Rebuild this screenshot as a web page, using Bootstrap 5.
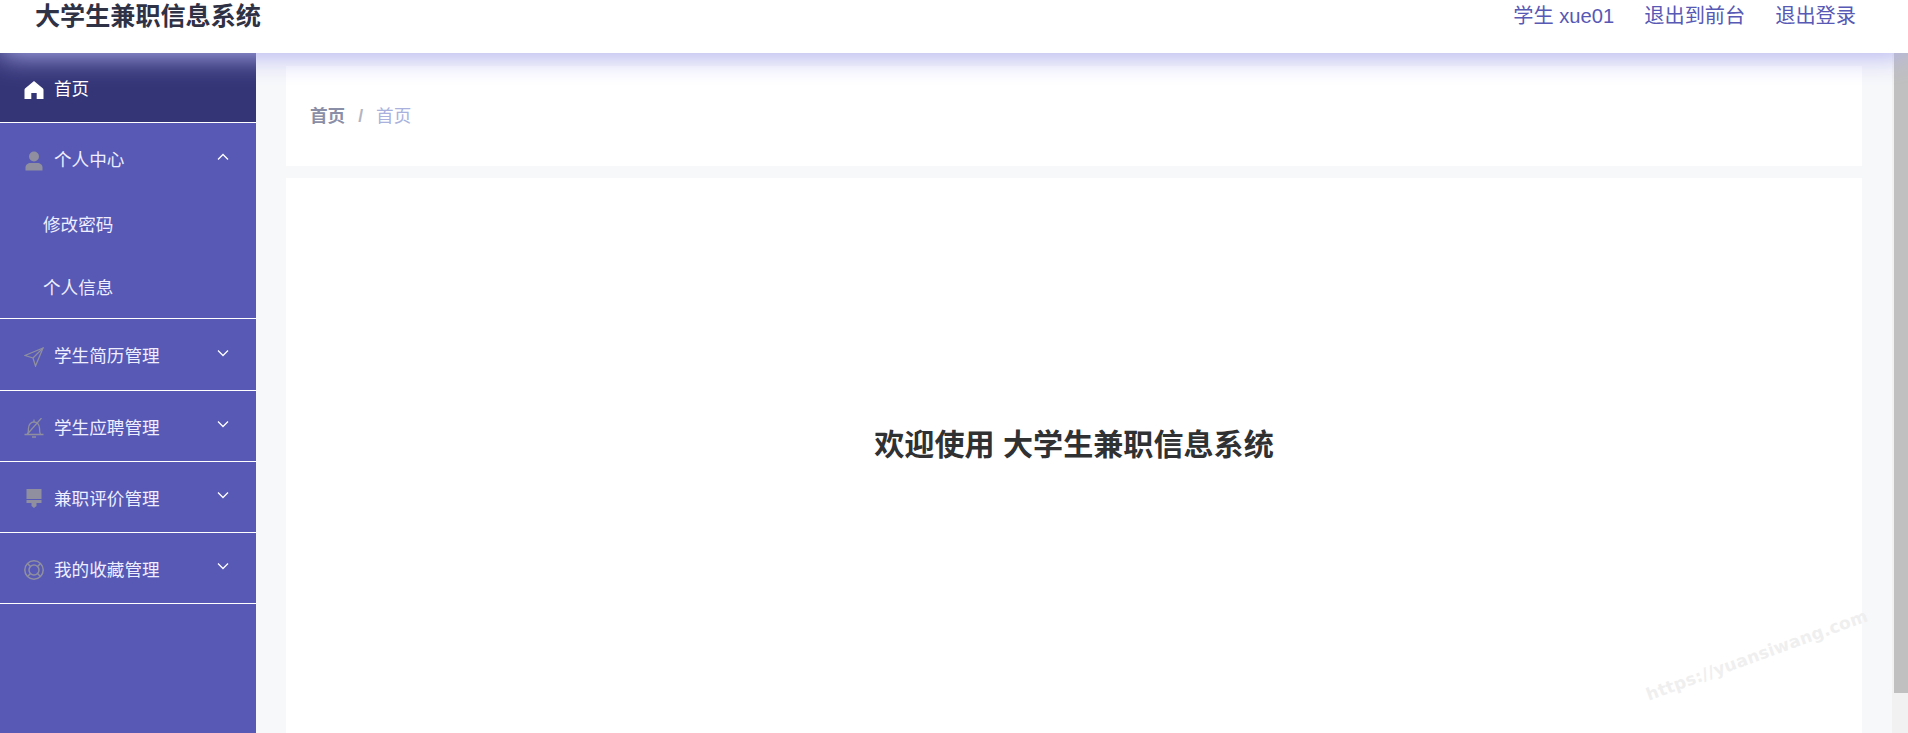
<!DOCTYPE html>
<html lang="zh-CN">
<head>
<meta charset="UTF-8">
<meta name="viewport" content="width=device-width, initial-scale=1.0">
<title>大学生兼职信息系统</title>
<link rel="stylesheet" href="https://cdn.jsdelivr.net/npm/bootstrap@5.3.0/dist/css/bootstrap.min.css">
<style>
  html, body { height: 100%; overflow: hidden; }
  body { font-family: "Liberation Sans", "Noto Sans CJK SC", sans-serif; background: #fff; }
  .app-shell { height: 733px; }
  .top-bar { height: 53px; background: #fff; box-shadow: 0 3px 28px #b0b0f0; z-index: 10; position: relative; padding: 1px 52px 22px 35px; }
  .brand-name { font-size: 25.1px; font-weight: 700; color: #2f3145; line-height: 30px; }
  .top-link { font-size: 20.2px; color: #5759b5; line-height: 30px; text-decoration: none; }
  .top-links { gap: 30px; }
  .side-bar { width: 256px; background: #5759b5; }
  .side-row { height: 71px; padding: 4px 27px 0 24px; border-bottom: 1px solid #fff; color: #eef; font-size: 17.6px; text-decoration: none; }
  .side-row.is-on { height: 70px; background: #343577; color: #fff; }
  .side-row.is-open { height: 69px; padding-top: 6px; border-bottom: 0; }
  .side-row.first-closed { height: 72px; }
  .side-sub { height: 63px; padding: 3px 0 0 43px; color: #eef; font-size: 17.6px; text-decoration: none; }
  .side-ico { width: 20px; height: 20px; margin-right: 10px; flex: none; color: #8f8f9f; }
  .is-on .side-ico { color: #fff; }
  .side-chev { width: 12px; height: 8px; margin-left: auto; margin-top: -8px; color: #fff; }
  .main-pane { background: #f7f8fa; padding: 13px 30px 0; }
  .crumb-box { height: 100px; background: #fff; padding-left: 24px; font-size: 17.6px; margin-bottom: 12px; }
  .crumb-box .breadcrumb-item { color: #a9b1dc; padding-left: 13px; }
  .crumb-box .breadcrumb-item:first-child { color: #8a8ea6; font-weight: 700; padding-left: 0; }
  .crumb-box .breadcrumb-item + .breadcrumb-item::before { color: #b4b4c0; font-weight: 700; padding-right: 13px; }
  .welcome-box { height: 700px; background: #fff; padding-top: 247px; }
  .welcome-text { font-size: 30.1px; font-weight: 700; color: #303133; line-height: 40px; margin: 0; }
  .fake-scroll { width: 16px; background: #f1f1f1; padding-left: 2px; }
  .fake-thumb { height: 640px; background: #c0c0c0; }
  .water-mark { position: absolute; left: 1640px; top: 643px; font-family: "DejaVu Sans", sans-serif; font-weight: 700; font-size: 17px; color: #efefef; transform: rotate(-20deg); letter-spacing: .2px; white-space: nowrap; }
</style>
</head>
<body>
<div class="app-shell d-flex flex-column">
  <header class="top-bar d-flex flex-shrink-0 justify-content-between align-items-center">
    <div class="brand-name">大学生兼职信息系统</div>
    <div class="top-links d-flex">
      <a class="top-link" href="#">学生 xue01</a>
      <a class="top-link" href="#">退出到前台</a>
      <a class="top-link" href="#">退出登录</a>
    </div>
  </header>

  <div class="d-flex flex-grow-1 overflow-hidden">
    <aside class="side-bar flex-shrink-0">
      <a class="side-row is-on d-flex align-items-center" href="#">
        <svg class="side-ico" viewBox="0 0 20 20" fill="currentColor"><path d="M10 1 1 8.500Q.5 9 .5 10V19h6.800v-6h5.400v6h6.800V10q0-1-.5-1.500z"/></svg>
        首页
      </a>
      <a class="side-row is-open d-flex align-items-center" href="#">
        <svg class="side-ico" viewBox="0 0 20 20" fill="currentColor"><circle cx="10" cy="5.500" r="5"/><path d="M1.500 19.500v-3c0-3 2.500-4.500 5-4.500h7c2.500 0 5 1.500 5 4.500v3z"/></svg>
        个人中心
        <svg class="side-chev" viewBox="0 0 12 8" fill="none" stroke="currentColor" stroke-width="1.300"><path d="M1 6.500 6 1.500l5 5"/></svg>
      </a>
      <a class="side-sub d-flex align-items-center" href="#">修改密码</a>
      <a class="side-sub d-flex align-items-center" href="#">个人信息</a>
      <div class="border-bottom border-white"></div>
      <a class="side-row first-closed d-flex align-items-center" href="#">
        <svg class="side-ico" viewBox="0 0 20 20" fill="none" stroke="currentColor" stroke-width="1.300"><path d="M19 1 1 8.500l8 2.500 2.500 8z"/><path d="M19 1 9 11"/></svg>
        学生简历管理
        <svg class="side-chev" viewBox="0 0 12 8" fill="none" stroke="currentColor" stroke-width="1.300"><path d="M1 1.500l5 5 5-5"/></svg>
      </a>
      <a class="side-row d-flex align-items-center" href="#">
        <svg class="side-ico" viewBox="0 0 20 20" fill="none" stroke="currentColor" stroke-width="1.300"><path d="M.5 16.500h19M3.500 16.500c.8-1.500 1-3 1-6.500s2.500-6 5.500-6 5.500 2.500 5.500 6 .2 5 1 6.500"/><path d="M8 19h4M10 1.500V4M17.500 0 3 16.500"/></svg>
        学生应聘管理
        <svg class="side-chev" viewBox="0 0 12 8" fill="none" stroke="currentColor" stroke-width="1.300"><path d="M1 1.500l5 5 5-5"/></svg>
      </a>
      <a class="side-row d-flex align-items-center" href="#">
        <svg class="side-ico" viewBox="0 0 20 20" fill="currentColor"><path d="M2.500 0h15v10h-15zM2.500 11h15v3h-5v3L10 19l-2.500-2v-3h-5z"/></svg>
        兼职评价管理
        <svg class="side-chev" viewBox="0 0 12 8" fill="none" stroke="currentColor" stroke-width="1.300"><path d="M1 1.500l5 5 5-5"/></svg>
      </a>
      <a class="side-row d-flex align-items-center" href="#">
        <svg class="side-ico" viewBox="0 0 20 20" fill="none" stroke="currentColor" stroke-width="1.500"><circle cx="10" cy="10" r="9.200"/><circle cx="10" cy="10" r="5"/><path d="M3.500 3.500 6.500 6.500M16.500 3.500l-3 3M3.500 16.500l3-3M16.500 16.500l-3-3"/></svg>
        我的收藏管理
        <svg class="side-chev" viewBox="0 0 12 8" fill="none" stroke="currentColor" stroke-width="1.300"><path d="M1 1.500l5 5 5-5"/></svg>
      </a>
    </aside>

    <main class="main-pane flex-grow-1 overflow-hidden">
      <div class="crumb-box d-flex align-items-center">
        <ol class="breadcrumb mb-0">
          <li class="breadcrumb-item">首页</li>
          <li class="breadcrumb-item">首页</li>
        </ol>
      </div>
      <div class="welcome-box text-center">
        <h1 class="welcome-text">欢迎使用 大学生兼职信息系统</h1>
      </div>
    </main>

    <div class="fake-scroll flex-shrink-0"><div class="fake-thumb"></div></div>
  </div>
</div>
<div class="water-mark">https://yuansiwang.com</div>
<script src="https://cdn.jsdelivr.net/npm/bootstrap@5.3.0/dist/js/bootstrap.bundle.min.js"></script>
</body>
</html>
